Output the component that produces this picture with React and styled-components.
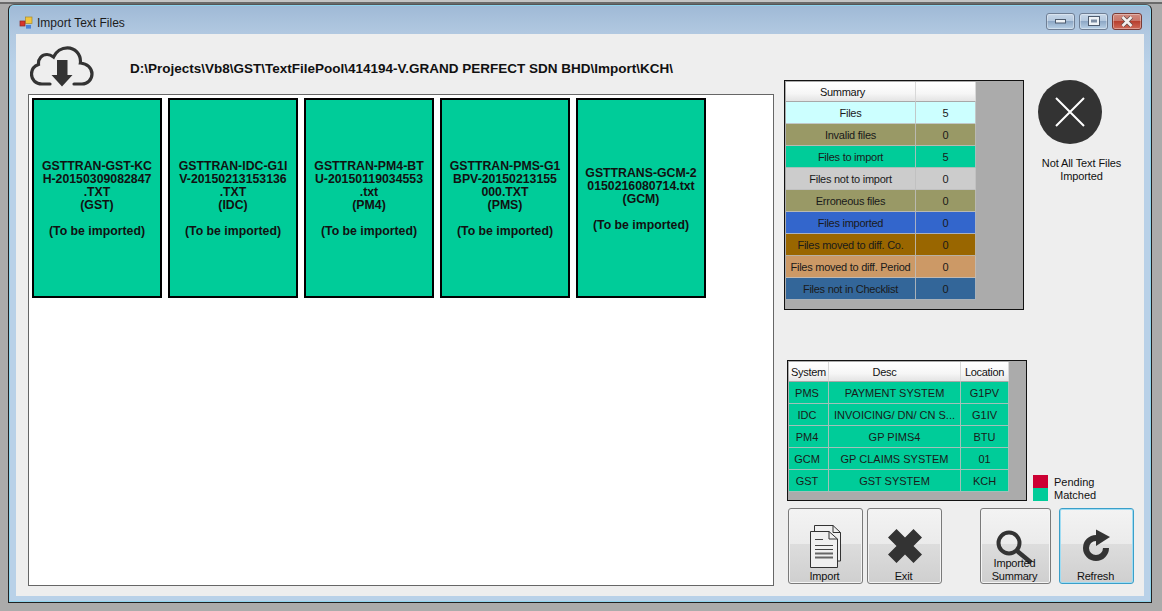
import React from "react";
import styled, { createGlobalStyle } from "styled-components";

const Global = createGlobalStyle`
  html, body { margin: 0; padding: 0; background: #ababab; }
  body { font-family: "Liberation Sans", Arial, sans-serif; color: #111; }
  * { box-sizing: border-box; }
`;

const Page = styled.div`
  width: 1162px;
  height: 611px;
  overflow: hidden;
  padding: 4px 10px 8px 8px;
  background-image: linear-gradient(#c4c4c4 0 2px, #6a6a6a 2px 4px, #ababab 4px);
`;

const Win = styled.div`
  height: 599px;
  display: flex;
  flex-direction: column;
  border: 1px solid #222;
  border-top-color: #555;
  border-radius: 6px 6px 0 0;
  box-shadow: inset 0 0 0 1px #8fd4ee;
  background: linear-gradient(#9fb9d6 0, #b2c9e1 30px, #b9d1e8 60px);
  padding: 0 7px 6px 7px;
`;

const TitleBar = styled.div`
  height: 29px;
  flex: none;
  display: flex;
  align-items: center;
  padding: 6px 0 0 3px;
  gap: 4px;
`;

const TitleText = styled.span`
  font-size: 12px;
  color: #1c1c1c;
  flex: 1;
`;

const WinButtons = styled.div`
  display: flex;
  gap: 4px;
  margin: -3px 2px 0 0;
`;

const WinButton = styled.div`
  width: ${(p) => (p.$close ? 30 : 29)}px;
  height: 17px;
  display: flex;
  align-items: center;
  justify-content: center;
  border: 1px solid ${(p) => (p.$close ? "#7a3a34" : "#6f7f95")};
  border-radius: 3px;
  background: ${(p) =>
    p.$close
      ? "linear-gradient(#d08a7e 0, #c9766a 45%, #b8402f 50%, #cf6a58 100%)"
      : "linear-gradient(#c7d7e8 0, #b4c8de 45%, #8ea8c6 50%, #b8d0e6 100%)"};
  box-shadow: inset 0 0 0 1px rgba(255, 255, 255, 0.35);
`;

const Client = styled.div`
  flex: 1;
  display: flex;
  background: #eeeeee;
  min-height: 0;
`;

const LeftCol = styled.div`
  width: 758px;
  padding: 0 0 10px 12px;
  display: flex;
  flex-direction: column;
  flex: none;
`;

const HeaderRow = styled.div`
  height: 60px;
  flex: none;
  display: flex;
  align-items: flex-start;
`;

const CloudWrap = styled.div`
  margin: 12px 0 0 2px;
  width: 64px;
  height: 42px;
  flex: none;
`;

const PathText = styled.div`
  margin: 27px 0 0 36px;
  font-size: 13.5px;
  font-weight: 700;
  line-height: 15px;
  white-space: nowrap;
`;

const FileList = styled.div`
  flex: 1;
  border: 1px solid #666;
  background: #fff;
  padding: 3px;
  display: flex;
  align-items: flex-start;
  gap: 6px;
`;

const Card = styled.div`
  width: 130px;
  height: 200px;
  flex: none;
  background: #00cc99;
  border: 2px solid #000;
  padding-top: 2px;
  display: flex;
  align-items: center;
  justify-content: center;
  text-align: center;
  white-space: pre-line;
  font-size: 12.3px;
  font-weight: 700;
  line-height: 13px;
`;

const RightCol = styled.div`
  flex: 1;
  padding: 46px 0 0 10px;
  display: flex;
  flex-direction: column;
`;

const TopRow = styled.div`
  display: flex;
  align-items: flex-start;
  gap: 14px;
`;

const GridPanel = styled.div`
  width: 240px;
  height: ${(p) => p.$h}px;
  flex: none;
  background: #ababab;
  border: 1px solid #111;
  padding: 1px;
  display: flex;
  flex-direction: column;
`;

const GridRow = styled.div`
  display: grid;
  grid-template-columns: ${(p) => p.$cols};
  height: ${(p) => p.$h || 22}px;
  width: max-content;
  flex: none;
`;

const HeadCell = styled.div`
  display: flex;
  align-items: center;
  justify-content: center;
  padding-right: ${(p) => p.$pr || 0}px;
  font-size: 11px;
  letter-spacing: -0.3px;
  color: #111;
  background: linear-gradient(#ffffff 0, #f6f6f6 60%, #e4e4e4 100%);
  border-right: 1px solid #d8d8d8;
  border-bottom: 1px solid #a8a8a8;
  white-space: nowrap;
`;

const Cell = styled.div`
  display: flex;
  align-items: center;
  justify-content: center;
  padding-right: ${(p) => p.$pr || 0}px;
  font-size: 11px;
  letter-spacing: ${(p) => p.$ls || 0}px;
  color: #1a1a1a;
  background: ${(p) => p.$bg};
  border-right: 1px solid rgba(190, 190, 190, 0.85);
  border-bottom: 1px solid rgba(190, 190, 190, 0.85);
  white-space: nowrap;
  overflow: hidden;
`;

const Status = styled.div`
  width: 87px;
  flex: none;
  display: flex;
  flex-direction: column;
  align-items: flex-start;
`;

const Circle = styled.div`
  width: 64px;
  height: 64px;
  border-radius: 50%;
  background: #333333;
  display: flex;
  align-items: center;
  justify-content: center;
`;

const StatusText = styled.div`
  width: 87px;
  margin-top: 13px;
  text-align: center;
  font-size: 11px;
  letter-spacing: -0.1px;
  line-height: 13px;
  white-space: pre-line;
`;

const LowerRow = styled.div`
  margin: 50px 0 0 3px;
  display: flex;
  align-items: flex-end;
  gap: 6px;
`;

const Legend = styled.div`
  display: flex;
  flex-direction: column;
`;

const LegendItem = styled.div`
  height: 13px;
  display: flex;
  align-items: center;
  gap: 6px;
  font-size: 11px;
`;

const Swatch = styled.span`
  width: 15px;
  height: 13px;
  background: ${(p) => p.$c};
`;

const ButtonRow = styled.div`
  margin: 7px 0 0 4px;
  display: flex;
`;

const ToolButton = styled.div`
  position: relative;
  width: ${(p) => p.$w}px;
  height: 76px;
  margin-left: ${(p) => p.$ml || 0}px;
  flex: none;
  border: 1px solid ${(p) => (p.$focus ? "#3a9fc9" : "#7a7a7a")};
  border-radius: 3px;
  background: linear-gradient(#f3f3f3 0, #ebebeb 47%, #dddddd 47%, #cfcfcf 100%);
  box-shadow: inset 0 0 0 1px ${(p) => (p.$focus ? "#9fdcf3" : "#f4f4f4")};
  display: flex;
  justify-content: center;
  align-items: flex-start;
  padding-top: ${(p) => p.$pt}px;
`;

const ButtonLabel = styled.div`
  position: absolute;
  left: 0;
  right: 2px;
  bottom: 0;
  text-align: center;
  font-size: 11px;
  letter-spacing: -0.2px;
  line-height: 13px;
  white-space: pre-line;
`;

const AppIcon = () => (
  <svg width="14" height="14" viewBox="0 0 14 14">
    <rect x="6.5" y="1" width="6.5" height="6.5" fill="#f2c53d" stroke="#a58a2a" strokeWidth="0.7" />
    <rect x="1" y="5" width="5" height="5" fill="#d8342c" stroke="#8c2a26" strokeWidth="0.7" />
    <rect x="7" y="9" width="5" height="3.6" fill="#4a82d8" />
  </svg>
);

const MinGlyph = () => (
  <svg width="11" height="5" viewBox="0 0 11 5"><rect x=".5" y=".5" width="10" height="3.5" fill="#eef2f6" stroke="#4d5b6e" /></svg>
);
const MaxGlyph = () => (
  <svg width="12" height="10" viewBox="0 0 12 10"><rect x=".5" y=".5" width="11" height="9" fill="#eef2f6" stroke="#4d5b6e" /><rect x="3" y="3.5" width="6" height="3" fill="#7d8da3" /></svg>
);
const CloseGlyph = () => (
  <svg width="14" height="11" viewBox="0 0 14 11">
    <path d="M2.5 1 L11.5 10 M11.5 1 L2.5 10" stroke="#5a4a48" strokeWidth="4" />
    <path d="M2.5 1 L11.5 10 M11.5 1 L2.5 10" stroke="#f4f0ee" strokeWidth="2.6" />
  </svg>
);

const CloudIcon = () => (
  <svg width="64" height="42" viewBox="0 0 64 42">
    <path
      d="M20 38 H12 C5.5 38 1.5 33.5 1.5 28 C1.5 23.5 4.5 20 8.5 18.5 C8 12.5 12 8.5 17 8.5 C19.5 8.5 21.5 9.5 23.5 11 C26 5.5 31.5 1.8 37.5 1.8 C45 1.8 50.5 8 50.5 15.5 C50.5 16 50.5 16.5 50.4 17 C57 17.5 62 22 62 28 C62 33.5 57.5 38 52 38 H44"
      fill="none"
      stroke="#333"
      strokeWidth="3.2"
      strokeLinecap="round"
    />
    <path d="M27 14 H37.5 V29 H42.5 L32 40.5 L21.5 29 H27 Z" fill="#333" />
  </svg>
);

const CrossIcon = () => (
  <svg width="34" height="34" viewBox="0 0 34 34">
    <path d="M8.5 0 L17 8.5 L25.5 0 L34 8.5 L25.5 17 L34 25.5 L25.5 34 L17 25.5 L8.5 34 L0 25.5 L8.5 17 L0 8.5 Z" fill="#333" />
  </svg>
);

const ThinX = () => (
  <svg width="30" height="30" viewBox="0 0 30 30">
    <path d="M1 1 L29 29 M29 1 L1 29" stroke="#fff" strokeWidth="2" />
  </svg>
);

const DocsIcon = () => (
  <svg width="34" height="45" viewBox="0 0 34 45">
    <path d="M5.5 7 V1.5 H24 L31.5 8.5 V37 H28.5" fill="#f0f0f0" stroke="#333" strokeWidth="1" />
    <path d="M24 1.5 V8.5 H31.5" fill="none" stroke="#333" strokeWidth="1" />
    <path d="M1.5 7.5 H20 L28.5 15 V43.5 H1.5 Z" fill="#f0f0f0" stroke="#333" strokeWidth="1" />
    <path d="M20 7.5 V15 H28.5" fill="none" stroke="#333" strokeWidth="1" />
    <path d="M6 15.5 H14 M6 21.5 H24 M6 25.5 H24" stroke="#444" strokeWidth="1" fill="none" />
    <path d="M6 29.5 H24 M6 33.5 H24" stroke="#666" strokeWidth="2" fill="none" />
  </svg>
);

const SearchIcon = () => (
  <svg width="42" height="40" viewBox="0 0 42 40">
    <circle cx="14" cy="14" r="10.5" fill="none" stroke="#333" strokeWidth="4" />
    <path d="M21.5 21.5 L36 33.5" stroke="#333" strokeWidth="4.4" />
  </svg>
);

const RefreshIcon = () => (
  <svg width="28" height="34" viewBox="0 0 28 34">
    <path d="M13 9 A10 10 0 1 0 23 19" fill="none" stroke="#333" strokeWidth="6" />
    <path d="M13 0.5 L27 8 L13 17 Z" fill="#333" />
  </svg>
);

const files = [
  "GSTTRAN-GST-KC\nH-20150309082847\n.TXT\n(GST)\n\n(To be imported)",
  "GSTTRAN-IDC-G1I\nV-20150213153136\n.TXT\n(IDC)\n\n(To be imported)",
  "GSTTRAN-PM4-BT\nU-20150119034553\n.txt\n(PM4)\n\n(To be imported)",
  "GSTTRAN-PMS-G1\nBPV-20150213155\n000.TXT\n(PMS)\n\n(To be imported)",
  "GSTTRANS-GCM-2\n0150216080714.txt\n(GCM)\n\n(To be imported)",
];

const summary = [
  ["Files", "5", "#ccffff"],
  ["Invalid files", "0", "#999966"],
  ["Files to import", "5", "#00cc99"],
  ["Files not to import", "0", "#cccccc"],
  ["Erroneous files", "0", "#999966"],
  ["Files imported", "0", "#3366cc"],
  ["Files moved to diff. Co.", "0", "#996600"],
  ["Files moved to diff. Period", "0", "#cc9966"],
  ["Files not in Checklist", "0", "#336699"],
];

const systems = [
  ["PMS", "PAYMENT SYSTEM", "G1PV"],
  ["IDC", "INVOICING/ DN/ CN S...", "G1IV"],
  ["PM4", "GP PIMS4", "BTU"],
  ["GCM", "GP CLAIMS SYSTEM", "01"],
  ["GST", "GST SYSTEM", "KCH"],
];

const SUMMARY_COLS = "130px 60px";
const SYSTEM_COLS = "40px 132px 48px";

export default function App() {
  return (
    <Page>
      <Global />
      <Win>
        <TitleBar>
          <AppIcon />
          <TitleText>Import Text Files</TitleText>
          <WinButtons>
            <WinButton><MinGlyph /></WinButton>
            <WinButton><MaxGlyph /></WinButton>
            <WinButton $close><CloseGlyph /></WinButton>
          </WinButtons>
        </TitleBar>
        <Client>
          <LeftCol>
            <HeaderRow>
              <CloudWrap><CloudIcon /></CloudWrap>
              <PathText>D:\Projects\Vb8\GST\TextFilePool\414194-V.GRAND PERFECT SDN BHD\Import\KCH\</PathText>
            </HeaderRow>
            <FileList>
              {files.map((f) => (
                <Card key={f}>{f}</Card>
              ))}
            </FileList>
          </LeftCol>
          <RightCol>
            <TopRow>
              <GridPanel $h={230}>
                <GridRow $cols={SUMMARY_COLS} $h={20}>
                  <HeadCell $pr={16}>Summary</HeadCell>
                  <HeadCell />
                </GridRow>
                {summary.map(([label, n, bg]) => (
                  <GridRow key={label} $cols={SUMMARY_COLS}>
                    <Cell $bg={bg} $ls={-0.26}>{label}</Cell>
                    <Cell $bg={bg}>{n}</Cell>
                  </GridRow>
                ))}
              </GridPanel>
              <Status>
                <Circle><ThinX /></Circle>
                <StatusText>{"Not All Text Files\nImported"}</StatusText>
              </Status>
            </TopRow>
            <LowerRow>
              <GridPanel $h={141}>
                <GridRow $cols={SYSTEM_COLS} $h={20}>
                  <HeadCell>System</HeadCell>
                  <HeadCell $pr={20}>Desc</HeadCell>
                  <HeadCell>Location</HeadCell>
                </GridRow>
                {systems.map(([a, b, c]) => (
                  <GridRow key={a} $cols={SYSTEM_COLS}>
                    <Cell $bg="#00cc99" $pr={3}>{a}</Cell>
                    <Cell $bg="#00cc99">{b}</Cell>
                    <Cell $bg="#00cc99">{c}</Cell>
                  </GridRow>
                ))}
              </GridPanel>
              <Legend>
                <LegendItem><Swatch $c="#cc0033" />Pending</LegendItem>
                <LegendItem><Swatch $c="#00cc99" />Matched</LegendItem>
              </Legend>
            </LowerRow>
            <ButtonRow>
              <ToolButton $w={75} $pt={15}>
                <DocsIcon />
                <ButtonLabel>Import</ButtonLabel>
              </ToolButton>
              <ToolButton $w={75} $ml={4} $pt={20}>
                <CrossIcon />
                <ButtonLabel>Exit</ButtonLabel>
              </ToolButton>
              <ToolButton $w={71} $ml={38} $pt={20}>
                <SearchIcon />
                <ButtonLabel>{"Imported\nSummary"}</ButtonLabel>
              </ToolButton>
              <ToolButton $w={75} $ml={8} $pt={20} $focus>
                <RefreshIcon />
                <ButtonLabel>Refresh</ButtonLabel>
              </ToolButton>
            </ButtonRow>
          </RightCol>
        </Client>
      </Win>
    </Page>
  );
}
